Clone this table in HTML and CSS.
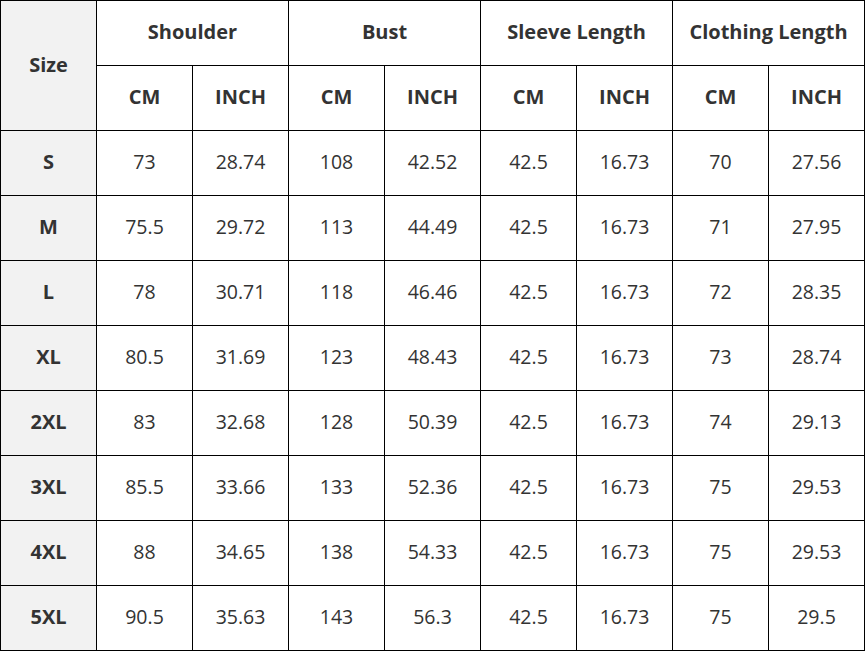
FILE: index.html
```html
<!DOCTYPE html>
<html>
<head>
<meta charset="utf-8">
<link rel="stylesheet" href="styles.css">
</head>
<body>
<table class="size-table">
  <colgroup>
    <col class="c"><col class="c"><col class="c"><col class="c"><col class="c"><col class="c"><col class="c"><col class="c"><col class="c">
  </colgroup>
  <thead>
    <tr>
      <th rowspan="2" class="size-col">Size</th>
      <th colspan="2">Shoulder</th>
      <th colspan="2">Bust</th>
      <th colspan="2">Sleeve Length</th>
      <th colspan="2">Clothing Length</th>
    </tr>
    <tr>
      <th>CM</th><th>INCH</th><th>CM</th><th>INCH</th><th>CM</th><th>INCH</th><th>CM</th><th>INCH</th>
    </tr>
  </thead>
  <tbody>
    <tr><th class="size-col">S</th><td>73</td><td>28.74</td><td>108</td><td>42.52</td><td>42.5</td><td>16.73</td><td>70</td><td>27.56</td></tr>
    <tr><th class="size-col">M</th><td>75.5</td><td>29.72</td><td>113</td><td>44.49</td><td>42.5</td><td>16.73</td><td>71</td><td>27.95</td></tr>
    <tr><th class="size-col">L</th><td>78</td><td>30.71</td><td>118</td><td>46.46</td><td>42.5</td><td>16.73</td><td>72</td><td>28.35</td></tr>
    <tr><th class="size-col">XL</th><td>80.5</td><td>31.69</td><td>123</td><td>48.43</td><td>42.5</td><td>16.73</td><td>73</td><td>28.74</td></tr>
    <tr><th class="size-col">2XL</th><td>83</td><td>32.68</td><td>128</td><td>50.39</td><td>42.5</td><td>16.73</td><td>74</td><td>29.13</td></tr>
    <tr><th class="size-col">3XL</th><td>85.5</td><td>33.66</td><td>133</td><td>52.36</td><td>42.5</td><td>16.73</td><td>75</td><td>29.53</td></tr>
    <tr><th class="size-col">4XL</th><td>88</td><td>34.65</td><td>138</td><td>54.33</td><td>42.5</td><td>16.73</td><td>75</td><td>29.53</td></tr>
    <tr><th class="size-col">5XL</th><td>90.5</td><td>35.63</td><td>143</td><td>56.3</td><td>42.5</td><td>16.73</td><td>75</td><td>29.5</td></tr>
  </tbody>
</table>
</body>
</html>
```

FILE: styles.css
```css
html, body {
  margin: 0;
  padding: 0;
  background: #ffffff;
}

.size-table {
  border-collapse: collapse;
  table-layout: fixed;
  width: 865px;
  font-family: "Open Sans", "Noto Sans", sans-serif;
  font-size: 20px;
  color: #333333;
}

.size-table .c {
  width: 96px;
}

.size-table th,
.size-table td {
  border: 1px solid #000000;
  height: 65px;
  padding: 0 0 3px 0;
  box-sizing: border-box;
  text-align: center;
  vertical-align: middle;
  font-weight: normal;
}

.size-table td {
  font-size: 19.5px;
}

.size-table th {
  font-weight: 700;
}

.size-table .size-col {
  background: #f2f2f2;
}
```
